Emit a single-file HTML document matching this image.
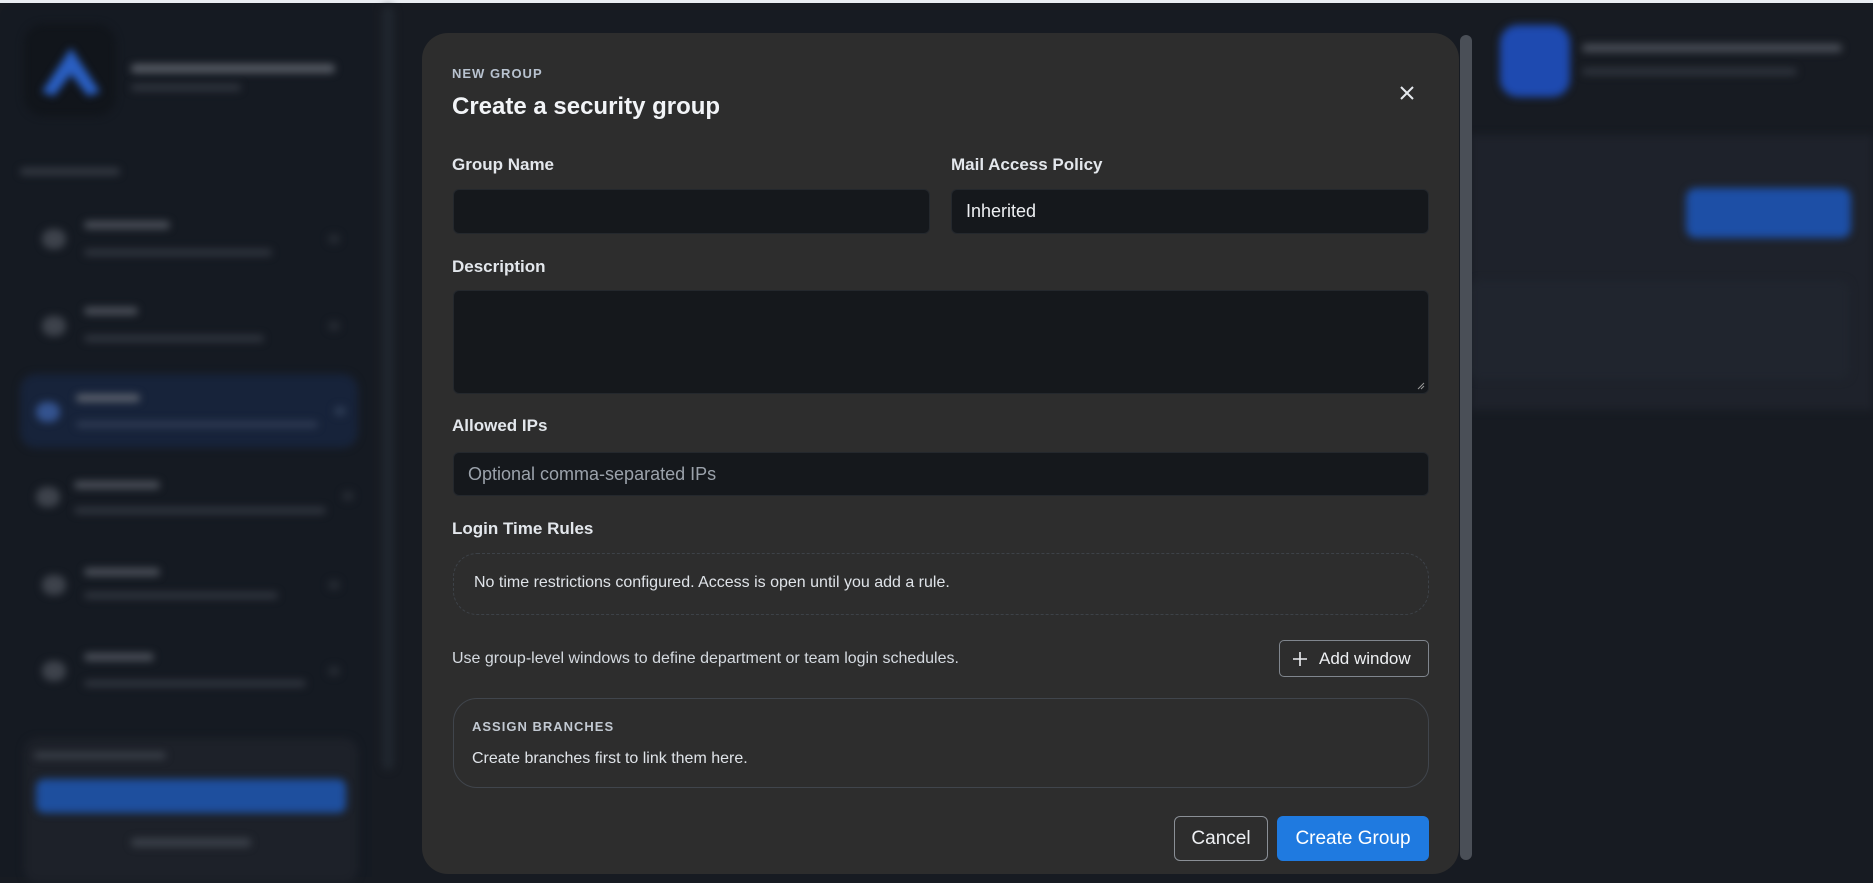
<!DOCTYPE html>
<html><head><meta charset="utf-8"><style>
*{box-sizing:border-box;margin:0;padding:0}
body{width:1873px;height:877px;overflow:hidden;background:#171b22;font-family:"Liberation Sans",sans-serif;position:relative}
.topline{position:absolute;left:0;top:0;width:1873px;height:3px;background:#e9edf2}
.bg{position:absolute;filter:blur(4px)}
.m{position:absolute;left:422px;top:33px;width:1037px;height:841px;background:#2d2d2d;border-radius:26px;color:#e6e9ee}
.sb{position:absolute;left:1460px;top:35px;width:12px;height:825px;background:#4a4f57;border-radius:6px}
.a{position:absolute}
.lbl{font-size:17px;font-weight:bold;color:#e3e7ec}
.inp{position:absolute;background:#15181c;border-radius:6px;border:1px solid #24282d}
.box{position:absolute;border-radius:24px}
.t{background:#4a4f58;height:8px;border-radius:4px}
.s{background:#30353e;height:7px;border-radius:4px}
.ic{background:#3e434c;width:24px;height:20px;border-radius:10px}
.ch{background:#262b33;width:12px;height:10px;border-radius:5px}
</style></head><body>
<div class="topline"></div>
<div class="bg" style="left:0;top:4px;width:372px;height:873px;background:#151a22;border-radius:14px 0 0 0;filter:none"></div>
<div class="bg" style="left:382px;top:6px;width:12px;height:764px;background:#20262e;border-radius:6px"></div>
<div class="bg" style="left:24px;top:24px;width:92px;height:92px;background:#11151b;border-radius:20px"></div>
<svg class="bg" style="left:36px;top:40px" width="70" height="60" viewBox="0 0 70 60"><path d="M6 52 L35 8 L64 52 L52 56 L35 34 L18 56Z" fill="#2a5fc2"/></svg>
<div class="bg t" style="left:131px;top:64px;width:204px;height:9px;background:#555a63"></div>
<div class="bg s" style="left:131px;top:84px;width:110px"></div>
<div class="bg s" style="left:20px;top:168px;width:100px;background:#353a43"></div>

<div class="bg ic" style="left:42px;top:229px"></div><div class="bg t" style="left:84px;top:221px;width:86px"></div><div class="bg s" style="left:84px;top:249px;width:188px"></div><div class="bg ch" style="left:328px;top:234px"></div>
<div class="bg ic" style="left:42px;top:316px"></div><div class="bg t" style="left:84px;top:307px;width:54px"></div><div class="bg s" style="left:84px;top:335px;width:180px"></div><div class="bg ch" style="left:328px;top:321px"></div>
<div class="bg" style="left:20px;top:374px;width:338px;height:74px;background:#17233a;border-radius:16px"></div>
<div class="bg ic" style="left:36px;top:402px;background:#34538f"></div><div class="bg t" style="left:76px;top:394px;width:64px;background:#5a606c"></div><div class="bg s" style="left:76px;top:421px;width:242px;background:#2e3a52"></div><div class="bg ch" style="left:334px;top:406px;background:#2c3a52"></div>
<div class="bg ic" style="left:36px;top:487px"></div><div class="bg t" style="left:74px;top:481px;width:86px"></div><div class="bg s" style="left:74px;top:507px;width:252px"></div><div class="bg ch" style="left:342px;top:491px"></div>
<div class="bg ic" style="left:42px;top:575px"></div><div class="bg t" style="left:84px;top:568px;width:76px"></div><div class="bg s" style="left:84px;top:592px;width:194px"></div><div class="bg ch" style="left:328px;top:580px"></div>
<div class="bg ic" style="left:42px;top:661px"></div><div class="bg t" style="left:84px;top:653px;width:70px"></div><div class="bg s" style="left:84px;top:680px;width:222px"></div><div class="bg ch" style="left:328px;top:666px"></div>

<div class="bg" style="left:24px;top:738px;width:334px;height:145px;background:#1d2129;border-radius:14px"></div>
<div class="bg s" style="left:34px;top:752px;width:132px;background:#3a3f48"></div>
<div class="bg" style="left:36px;top:779px;width:310px;height:34px;background:#1e4f9e;border-radius:8px"></div>
<div class="bg s" style="left:131px;top:838px;width:120px;height:9px;background:#3a3f48"></div>

<div class="bg" style="left:1470px;top:135px;width:403px;height:275px;background:#1e222b"></div>
<div class="bg" style="left:1500px;top:25px;width:70px;height:72px;background:#1e4ab0;border-radius:18px"></div>
<div class="bg t" style="left:1582px;top:44px;width:260px;height:8px"></div>
<div class="bg s" style="left:1582px;top:68px;width:215px"></div>
<div class="bg" style="left:1686px;top:188px;width:165px;height:50px;background:#1d4fa6;border-radius:10px"></div>
<div class="bg" style="left:1470px;top:280px;width:380px;height:100px;background:#20252e;border-radius:10px"></div>

<div class="m">
 <div class="a" style="left:30px;top:33px;font-size:13px;font-weight:bold;letter-spacing:1px;color:#b8c2cf">NEW GROUP</div>
 <div class="a" style="left:30px;top:60px;font-size:24px;font-weight:bold;color:#f2f4f7">Create a security group</div>
 <svg class="a" style="left:975px;top:50px" width="20" height="20" viewBox="0 0 20 20"><path d="M4 4L16 16M16 4L4 16" stroke="#e6eaee" stroke-width="2"/></svg>
 <div class="a lbl" style="left:30px;top:122px">Group Name</div>
 <div class="a lbl" style="left:529px;top:122px">Mail Access Policy</div>
 <div class="inp" style="left:31px;top:156px;width:477px;height:45px"></div>
 <div class="inp" style="left:529px;top:156px;width:478px;height:45px"><span style="position:absolute;left:14px;top:11px;font-size:18px;color:#eef0f3">Inherited</span></div>
 <div class="a lbl" style="left:30px;top:224px">Description</div>
 <div class="inp" style="left:31px;top:257px;width:976px;height:104px"><svg style="position:absolute;right:3px;bottom:3px" width="8" height="8"><path d="M1 7L7 1M4 7L7 4" stroke="#999" stroke-width="1"/></svg></div>
 <div class="a lbl" style="left:30px;top:383px">Allowed IPs</div>
 <div class="inp" style="left:31px;top:419px;width:976px;height:44px"><span style="position:absolute;left:14px;top:11px;font-size:18px;color:#9ba2ab">Optional comma-separated IPs</span></div>
 <div class="a lbl" style="left:30px;top:486px">Login Time Rules</div>
 <div class="box" style="left:31px;top:520px;width:976px;height:62px;border:1px dashed #3d4248"><span style="position:absolute;left:20px;top:20px;font-size:16px;color:#dfe3e8">No time restrictions configured. Access is open until you add a rule.</span></div>
 <div class="a" style="left:30px;top:617px;font-size:16px;color:#d5dae0">Use group-level windows to define department or team login schedules.</div>
 <div class="a" style="left:857px;top:607px;width:150px;height:37px;border:1px solid #80868e;border-radius:5px;font-size:17px;color:#eef0f3;display:flex;align-items:center;padding-left:12px"><svg width="16" height="16" style="margin-right:11px"><path d="M8 1V15M1 8H15" stroke="#eef0f3" stroke-width="1.6"/></svg>Add window</div>
 <div class="box" style="left:31px;top:665px;width:976px;height:90px;border:1px solid #40454c">
  <div class="a" style="left:18px;top:20px;font-size:13px;font-weight:bold;letter-spacing:1px;color:#c2c9d2">ASSIGN BRANCHES</div>
  <div class="a" style="left:18px;top:51px;font-size:16px;color:#dfe3e8">Create branches first to link them here.</div>
 </div>
 <div class="a" style="left:752px;top:783px;width:94px;height:45px;border:1px solid #8a8f96;border-radius:6px;font-size:19px;color:#eef0f3;text-align:center;line-height:43px">Cancel</div>
 <div class="a" style="left:855px;top:783px;width:152px;height:45px;background:#1f7ae0;border-radius:6px;font-size:19px;color:#fff;text-align:center;line-height:45px">Create Group</div>
</div>
<div class="sb"></div>
</body></html>
